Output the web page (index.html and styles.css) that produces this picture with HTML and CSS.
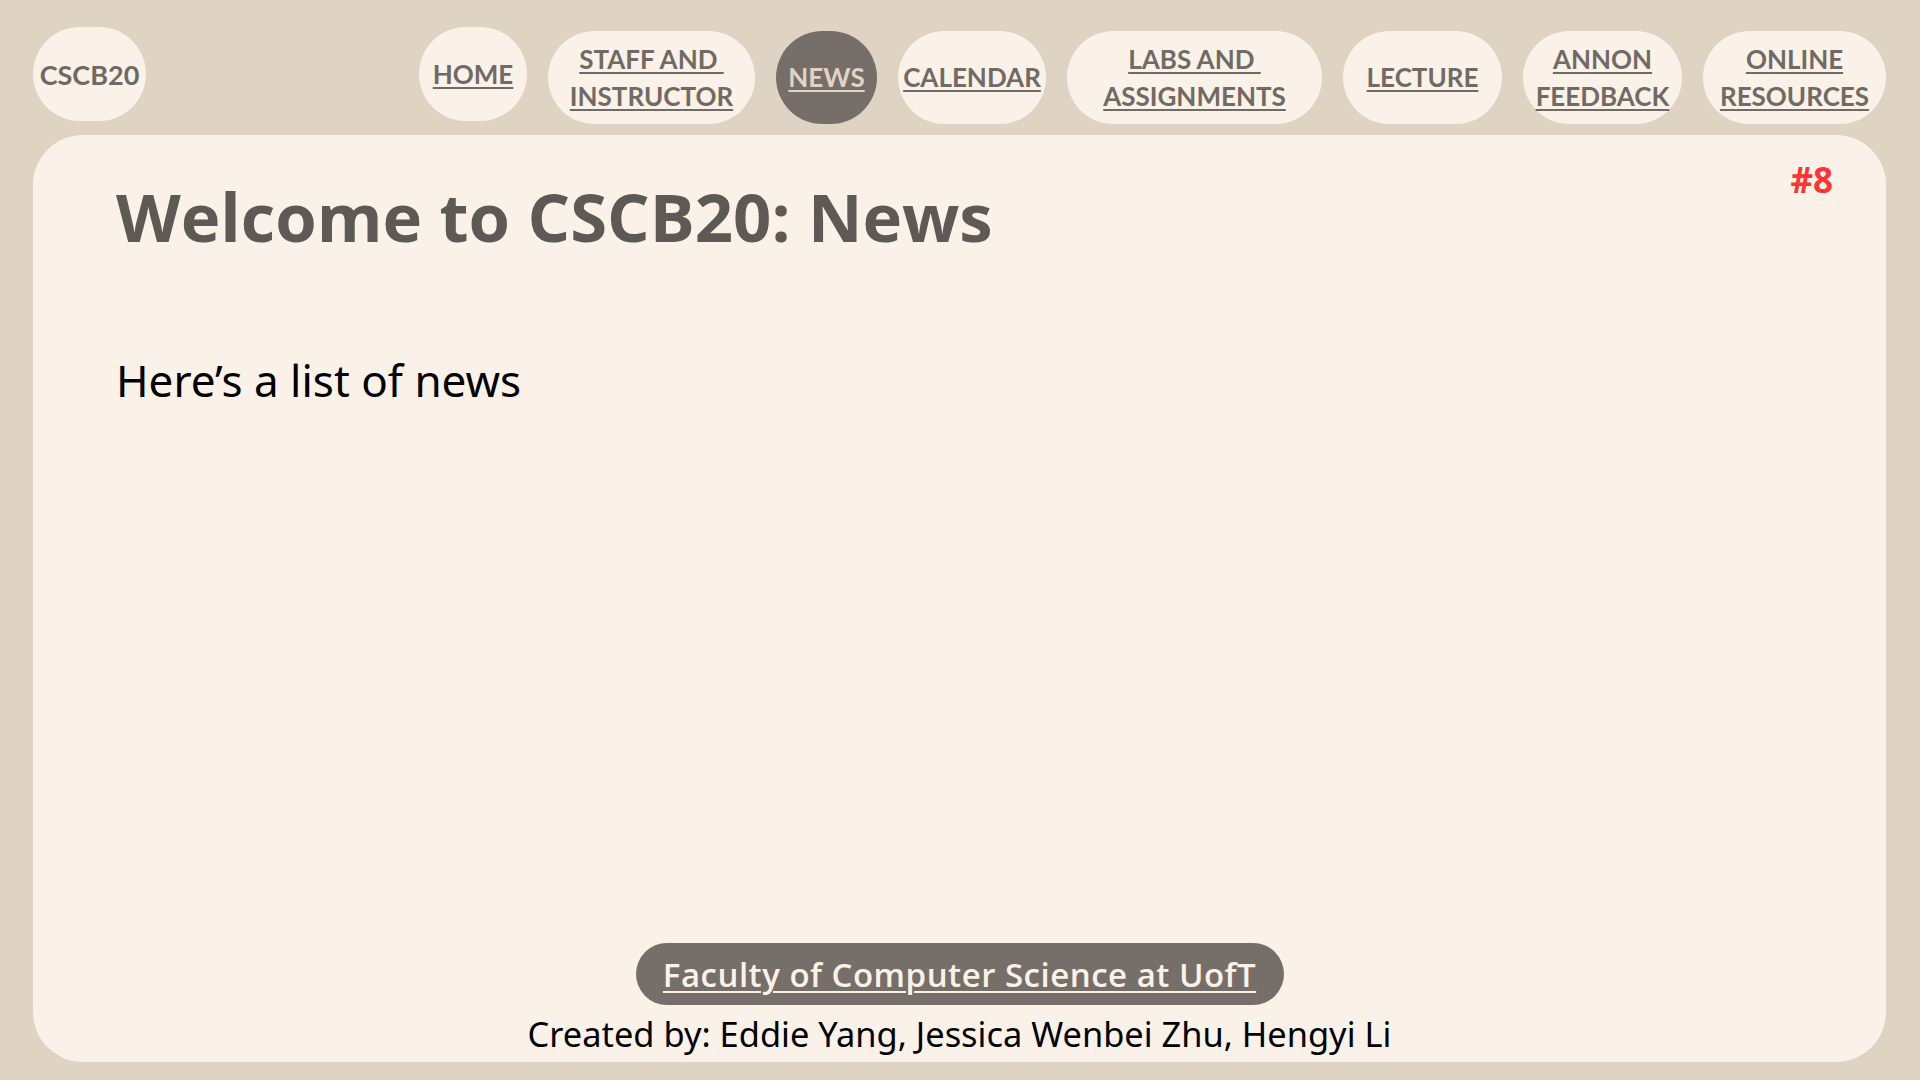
FILE: index.html
```html
<!DOCTYPE html>
<html lang="en">
<head>
<meta charset="utf-8">
<title>CSCB20: News</title>
<link rel="stylesheet" href="styles.css">
</head>
<body>
<header class="topbar">
  <div class="pill brand">CSCB20</div>
  <nav class="nav">
    <a class="pill link w-home up" href="#">HOME</a>
    <a class="pill link w-staff" href="#"><span>STAFF AND&nbsp;</span><span>INSTRUCTOR</span></a>
    <a class="pill link w-news active" href="#">NEWS</a>
    <a class="pill link w-cal" href="#">CALENDAR</a>
    <a class="pill link w-labs" href="#"><span>LABS AND&nbsp;</span><span>ASSIGNMENTS</span></a>
    <a class="pill link w-lect" href="#">LECTURE</a>
    <a class="pill link w-annon" href="#"><span>ANNON</span><span>FEEDBACK</span></a>
    <a class="pill link w-online" href="#"><span>ONLINE</span><span>RESOURCES</span></a>
  </nav>
</header>
<main class="card">
  <span class="badge">#8</span>
  <h1 class="title">Welcome to CSCB20: News</h1>
  <p class="intro">Here’s a list of news</p>
  <footer class="footer">
    <a class="faculty" href="#">Faculty of Computer Science at UofT</a>
    <p class="credits">Created by: Eddie Yang, Jessica Wenbei Zhu, Hengyi Li</p>
  </footer>
</main>
</body>
</html>
```
FILE: styles.css
```css
html, body {
  margin: 0;
  padding: 0;
}
body {
  width: 1920px;
  height: 1080px;
  background: #dfd3c3;
  overflow: hidden;
  font-family: "Lato", "Noto Sans", sans-serif;
}
.topbar {
  display: flex;
  justify-content: space-between;
  align-items: flex-start;
  padding: 27px 34px 0 33px;
  height: 108px;
  box-sizing: border-box;
}
.pill {
  display: flex;
  flex-direction: column;
  justify-content: center;
  align-items: center;
  box-sizing: border-box;
  flex: none;
  min-width: 0;
  height: 93px;
  border-radius: 50px;
  background: #faf2e8;
  color: #716a64;
  font-weight: 700;
  font-size: 26px;
  line-height: 37px;
  text-align: center;
  white-space: nowrap;
}
.brand {
  width: 113px;
  height: 94px;
  font-size: 27px;
  color: #6f6863;
}
.nav {
  display: flex;
  gap: 21px;
}
.link {
  text-decoration: underline;
  text-decoration-thickness: 2px;
  text-underline-offset: 3px;
  margin-top: 4px;
}
.link.up {
  margin-top: 0;
  height: 94px;
}
.link span {
  display: block;
}
.link.active {
  background: #766e69;
  color: #e0d4c4;
}
.w-home { width: 108px; }
.w-staff { width: 207px; }
.w-news { width: 101px; }
.w-cal { width: 148px; }
.w-labs { width: 255px; }
.w-lect { width: 159px; }
.w-annon { width: 159px; }
.w-online { width: 183px; }

.card {
  position: relative;
  display: flex;
  flex-direction: column;
  margin: 27px 34px 0 33px;
  height: 927px;
  box-sizing: border-box;
  padding: 43px 83px 9px 83px;
  background: #faf2e8;
  border-radius: 50px;
}
.badge {
  position: absolute;
  top: 24px;
  right: 53px;
  color: #ff3333;
  font-family: "Open Sans", sans-serif;
  font-weight: 700;
  font-size: 35px;
  line-height: 1.2;
}
.title {
  margin: 0;
  font-family: "Open Sans", sans-serif;
  font-weight: 700;
  font-size: 67px;
  line-height: 77px;
  color: #5e5954;
}
.intro {
  margin: 99px 0 0 0;
  font-family: "Noto Sans", sans-serif;
  font-size: 44px;
  line-height: 52px;
  color: #000;
}
.footer {
  margin-top: auto;
  display: flex;
  flex-direction: column;
  align-items: center;
  gap: 10px;
}
.faculty {
  display: flex;
  align-items: center;
  justify-content: center;
  width: 648px;
  height: 62px;
  border-radius: 31px;
  background: #766f69;
  color: #faf2e8;
  font-family: "Open Sans", sans-serif;
  font-weight: 600;
  font-size: 33px;
  letter-spacing: 0.5px;
  text-decoration: underline;
  text-decoration-thickness: 2px;
  text-underline-offset: 4px;
}
.credits {
  margin: 0;
  font-family: "Noto Sans", sans-serif;
  font-size: 34.4px;
  line-height: 38px;
  color: #000;
}
```
